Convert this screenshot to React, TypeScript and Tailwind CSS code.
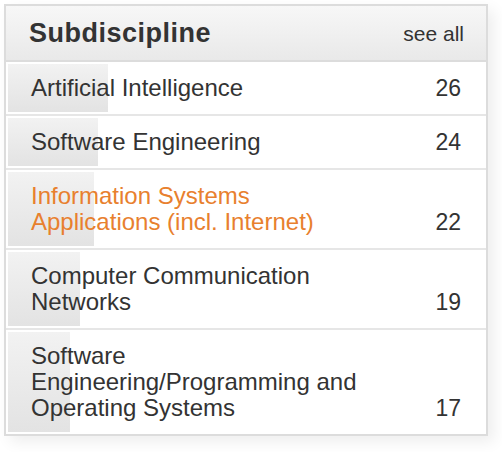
import React from 'react';

type Item = { name: string; count: number; bar: number; active?: boolean };

const items: Item[] = [
  { name: 'Artificial Intelligence', count: 26, bar: 100 },
  { name: 'Software Engineering', count: 24, bar: 90 },
  { name: 'Information Systems Applications (incl. Internet)', count: 22, bar: 86, active: true },
  { name: 'Computer Communication Networks', count: 19, bar: 72 },
  { name: 'Software Engineering/Programming and Operating Systems', count: 17, bar: 62 },
];

export default function App() {
  return (
    <div className="min-h-[452px] w-[502px] bg-white pt-[4px] pl-[4px]" style={{ fontFamily: '"Liberation Sans", Arial, Helvetica, sans-serif' }}>
      <div className="w-[484px] border-2 border-[#dcdcdc] bg-white shadow-[6px_6px_14px_rgba(0,0,0,0.07)]">
        {/* Header */}
        <div className="flex h-[56px] items-center justify-between border-b-2 border-[#dcdcdc] bg-gradient-to-b from-[#f7f7f7] to-[#e9e9e9] pl-[23px] pr-[22px]">
          <h2 className="text-[27px] font-bold leading-none tracking-[0.5px] text-[#333]">Subdiscipline</h2>
          <a className="text-[21px] leading-none text-[#333]">see all</a>
        </div>

        {/* Rows */}
        {items.map((item, i) => (
          <div
            key={item.name}
            className={`relative flex items-end justify-between py-[13px] pl-[25px] pr-[25px] ${
              i < items.length - 1 ? 'border-b-2 border-[#e6e6e6]' : ''
            }`}
          >
            <div
              className="absolute top-[2px] bottom-[2px] left-[2px] bg-gradient-to-b from-[#f2f2f2] to-[#e3e3e3]"
              style={{ width: item.bar }}
            />
            <span
              className={`relative w-[335px] text-[24px] leading-[26px] ${
                item.active ? 'text-[#e8802e]' : 'text-[#333]'
              }`}
            >
              {item.name}
            </span>
            <span className="relative text-[23px] leading-[26px] text-[#333]">{item.count}</span>
          </div>
        ))}
      </div>
    </div>
  );
}
